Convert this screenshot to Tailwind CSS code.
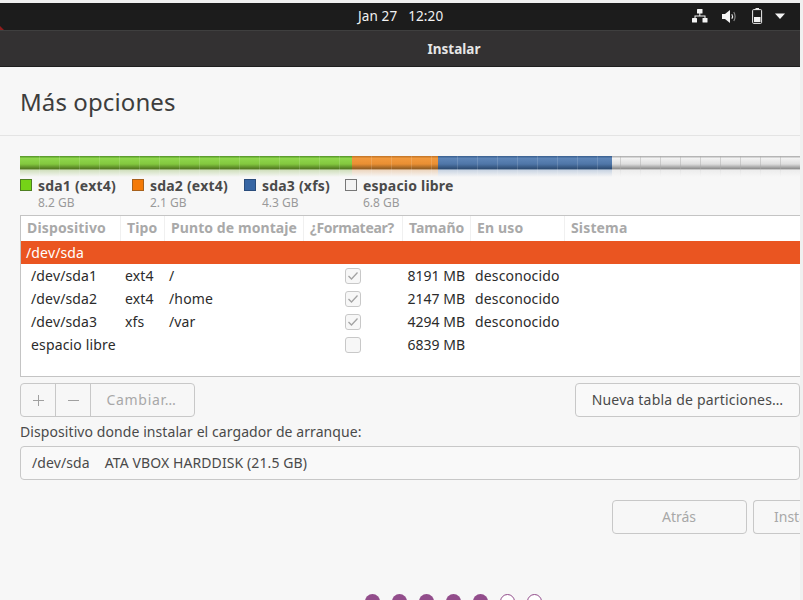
<!DOCTYPE html>
<html>
<head>
<meta charset="utf-8">
<script src="https://cdn.jsdelivr.net/npm/@tailwindcss/browser@4"></script>
</head>
<body class="bg-[#f0f0f0] font-['Noto_Sans','Open_Sans',sans-serif] overflow-hidden">
<div class="w-[803px] h-[600px] pt-[3px] overflow-hidden">
  <div class="w-[800px] h-[597px] flex flex-col bg-[#f7f7f7] overflow-hidden">
    <header class="relative h-[28px] shrink-0 bg-[#1c1c1c] border-b border-[#3f3f3f] flex items-center text-white">
      <div class="absolute left-0 bottom-0 w-0 h-0 border-l-[4px] border-l-[#8f1d1d] border-t-[4px] border-t-transparent"></div>
      <span class="absolute left-[358px] top-[4px] text-[13.5px] leading-[18px] tracking-[0.12px] text-[#f2f2f2] whitespace-pre">Jan 27   12:20</span>
      <svg class="absolute left-[692px] top-[6px]" width="16" height="15" viewBox="0 0 16 15" fill="#f4f4f4"><rect x="5" y="0" width="5.5" height="4.5" rx=".5"/><rect x="0" y="9" width="5" height="4.5" rx=".5"/><rect x="10.5" y="9" width="5" height="4.5" rx=".5"/><path d="M7.3 4h1v2.5h5.2V9h-1V7.5H3.5V9h-1V6.5h4.8z"/></svg>
      <svg class="absolute left-[722px] top-[6px]" width="15" height="15" viewBox="0 0 15 15"><path d="M0 5h3l5-4v13l-5-4H0z" fill="#f4f4f4"/><path d="M9.8 5.3q1.5 2.2 0 4.4" stroke="#f4f4f4" stroke-width="1.1" fill="none"/><path d="M11.8 3q2.6 4.5 0 9" stroke="#8a8a8a" stroke-width="1.1" fill="none"/></svg>
      <svg class="absolute left-[752px] top-[5px]" width="11" height="16" viewBox="0 0 11 16"><rect x=".6" y="1.6" width="9" height="13.8" rx="1" fill="none" stroke="#eee" stroke-width="1"/><rect x="3.5" y="0" width="3.5" height="1.5" fill="#eee"/><rect x="2" y="9" width="6.5" height="5" fill="#f4f4f4"/></svg>
      <svg class="absolute left-[775px] top-[10px]" width="11" height="7" viewBox="0 0 11 7"><path d="M0 .5h10L5 6z" fill="#f4f4f4"/></svg>
    </header>
    <div class="h-[36px] shrink-0 bg-[#333132] border-b border-[#1f1f1f] flex items-center justify-center">
      <span class="text-[13.5px] font-bold text-[#e6e6e6] ml-[108px] mt-[1px]">Instalar</span>
    </div>
    <div class="h-[69px] shrink-0 border-b border-[#e4e4e4] pl-[20px] flex items-start">
      <h1 class="text-[24px] leading-[32px] text-[#3d3d3d] mt-[19px] tracking-[0.1px]">Más opciones</h1>
    </div>
    <div class="pl-[20px] pt-[20px] flex flex-col flex-1">
      <div class="flex h-[21px] w-[780px] shrink-0">
        <div class="w-[332px] bg-[linear-gradient(180deg,transparent_0,transparent_13px,rgba(247,247,247,.55)_14px,#f7f7f7_21px),repeating-linear-gradient(90deg,transparent_0,transparent_19px,rgba(255,255,255,.14)_19px,rgba(255,255,255,.14)_20px),linear-gradient(180deg,#5d9e2e_0,#5d9e2e_1px,#90d84d_2px,#83c83f_8px,#4f7420_13px,#9fc274_14px,#9fc274_21px)]"></div>
        <div class="w-[86px] bg-[linear-gradient(180deg,transparent_0,transparent_13px,rgba(247,247,247,.55)_14px,#f7f7f7_21px),repeating-linear-gradient(90deg,transparent_0,transparent_19px,rgba(255,255,255,.14)_19px,rgba(255,255,255,.14)_20px),linear-gradient(180deg,#c97a2a_0,#c97a2a_1px,#f29a3e_2px,#e98f33_8px,#8d5a22_13px,#e0ad7a_14px,#e0ad7a_21px)]"></div>
        <div class="w-[174px] bg-[linear-gradient(180deg,transparent_0,transparent_13px,rgba(247,247,247,.55)_14px,#f7f7f7_21px),repeating-linear-gradient(90deg,transparent_0,transparent_19px,rgba(255,255,255,.14)_19px,rgba(255,255,255,.14)_20px),linear-gradient(180deg,#3f6595_0,#3f6595_1px,#5f86b8_2px,#4f76a8_8px,#2c4a70_13px,#8fa8c8_14px,#8fa8c8_21px)]"></div>
        <div class="flex-1 bg-[linear-gradient(180deg,transparent_0,transparent_13px,rgba(247,247,247,.6)_14px,#f7f7f7_21px),repeating-linear-gradient(90deg,transparent_0,transparent_8px,rgba(170,170,170,.45)_8px,rgba(170,170,170,.45)_9px,transparent_9px,transparent_20px),linear-gradient(180deg,#b5b5b5_0,#b5b5b5_1px,#f4f4f4_2px,#dedede_8px,#8a8a8a_13px,#dcdcdc_14px,#dcdcdc_21px)]"></div>
      </div>
      <div class="flex h-[38px] shrink-0 items-start">
        <div class="w-[112px] flex gap-[6px]"><span class="w-[12px] h-[12px] mt-[2px] bg-[#75d317] border border-[#4e7f21]"></span><div><div class="text-[14px] leading-[18px] tracking-[0.2px] font-bold text-[#4a4a4a]">sda1 (ext4)</div><div class="text-[12px] leading-[16px] text-[#9a9a9a]">8.2 GB</div></div></div>
        <div class="w-[112px] flex gap-[6px]"><span class="w-[12px] h-[12px] mt-[2px] bg-[#f47a07] border border-[#a7611c]"></span><div><div class="text-[14px] leading-[18px] tracking-[0.2px] font-bold text-[#4a4a4a]">sda2 (ext4)</div><div class="text-[12px] leading-[16px] text-[#9a9a9a]">2.1 GB</div></div></div>
        <div class="w-[101px] flex gap-[6px]"><span class="w-[12px] h-[12px] mt-[2px] bg-[#3766a4] border border-[#2a4d7c]"></span><div><div class="text-[14px] leading-[18px] tracking-[0.2px] font-bold text-[#4a4a4a]">sda3 (xfs)</div><div class="text-[12px] leading-[16px] text-[#9a9a9a]">4.3 GB</div></div></div>
        <div class="flex gap-[6px]"><span class="w-[12px] h-[12px] mt-[2px] bg-[#f3f3f3] border border-[#777]"></span><div><div class="text-[14px] leading-[18px] tracking-[0.2px] font-bold text-[#4a4a4a]">espacio libre</div><div class="text-[12px] leading-[16px] text-[#9a9a9a]">6.8 GB</div></div></div>
      </div>
      <div class="w-[780px] h-[162px] shrink-0 bg-white border-y border-l border-[#c4c4c4] flex flex-col text-[14px] tracking-[0.15px] text-[#2b2b2b]">
        <div class="h-[25px] shrink-0 flex text-[14px] tracking-[0.15px] font-bold text-[#a9a9a9] leading-[24px]">
          <div class="w-[100px] pl-[6px] border-r border-[#f0f0f0]">Dispositivo</div>
          <div class="w-[44px] pl-[6px] border-r border-[#f0f0f0]">Tipo</div>
          <div class="w-[139px] pl-[6px] border-r border-[#f0f0f0] whitespace-nowrap overflow-hidden tracking-[0.08px]">Punto de montaje</div>
          <div class="w-[99px] pl-[6px] border-r border-[#f0f0f0] whitespace-nowrap overflow-hidden tracking-[-0.3px]">¿Formatear?</div>
          <div class="w-[68px] pl-[6px] border-r border-[#f0f0f0] tracking-normal">Tamaño</div>
          <div class="w-[94px] pl-[6px] border-r border-[#f0f0f0]">En uso</div>
          <div class="flex-1 pl-[6px]">Sistema</div>
        </div>
        <div class="h-[23px] shrink-0 bg-[#ea5521] text-white pl-[5px] leading-[23px]">/dev/sda</div>
        <div class="h-[23px] shrink-0 flex items-center leading-[23px]">
          <div class="w-[104px] pl-[10px]">/dev/sda1</div><div class="w-[44px]">ext4</div><div class="w-[176px]">/</div>
          <div class="w-[60px]"><svg class="block" width="16" height="16" viewBox="0 0 16 16"><rect x=".5" y=".5" width="15" height="15" rx="2.5" fill="#f7f7f7" stroke="#c8c8c8"/><path d="M3.5 8l3 3 6-6.5" fill="none" stroke="#a3a3a3" stroke-width="1.3"/></svg></div>
          <div class="w-[60px] text-right whitespace-nowrap tracking-normal">8191 MB</div><div class="pl-[10px]">desconocido</div>
        </div>
        <div class="h-[23px] shrink-0 flex items-center leading-[23px]">
          <div class="w-[104px] pl-[10px]">/dev/sda2</div><div class="w-[44px]">ext4</div><div class="w-[176px]">/home</div>
          <div class="w-[60px]"><svg class="block" width="16" height="16" viewBox="0 0 16 16"><rect x=".5" y=".5" width="15" height="15" rx="2.5" fill="#f7f7f7" stroke="#c8c8c8"/><path d="M3.5 8l3 3 6-6.5" fill="none" stroke="#a3a3a3" stroke-width="1.3"/></svg></div>
          <div class="w-[60px] text-right whitespace-nowrap tracking-normal">2147 MB</div><div class="pl-[10px]">desconocido</div>
        </div>
        <div class="h-[23px] shrink-0 flex items-center leading-[23px]">
          <div class="w-[104px] pl-[10px]">/dev/sda3</div><div class="w-[44px]">xfs</div><div class="w-[176px]">/var</div>
          <div class="w-[60px]"><svg class="block" width="16" height="16" viewBox="0 0 16 16"><rect x=".5" y=".5" width="15" height="15" rx="2.5" fill="#f7f7f7" stroke="#c8c8c8"/><path d="M3.5 8l3 3 6-6.5" fill="none" stroke="#a3a3a3" stroke-width="1.3"/></svg></div>
          <div class="w-[60px] text-right whitespace-nowrap tracking-normal">4294 MB</div><div class="pl-[10px]">desconocido</div>
        </div>
        <div class="h-[23px] shrink-0 flex items-center leading-[23px]">
          <div class="w-[324px] pl-[10px]">espacio libre</div>
          <div class="w-[60px]"><svg class="block" width="16" height="16" viewBox="0 0 16 16"><rect x=".5" y=".5" width="15" height="15" rx="2.5" fill="#f7f7f7" stroke="#c8c8c8"/></svg></div>
          <div class="w-[60px] text-right whitespace-nowrap tracking-normal">6839 MB</div>
        </div>
      </div>
      <div class="w-[780px] flex justify-between mt-[6px] text-[14px]">
        <div class="flex h-[34px] border border-[#c8c8c8] rounded-[4px] text-[#a8a8a8]">
          <div class="w-[35px] border-r border-[#c8c8c8] flex items-center justify-center"><svg width="11" height="11" viewBox="0 0 11 11"><path d="M5.5 0v11M0 5.5h11" stroke="#a0a0a0" stroke-width="1"/></svg></div>
          <div class="w-[35px] border-r border-[#c8c8c8] flex items-center justify-center"><svg width="11" height="11" viewBox="0 0 11 11"><path d="M0 5.5h11" stroke="#a0a0a0" stroke-width="1"/></svg></div>
          <div class="w-[103px] pb-[2px] pr-[2px] flex items-center justify-center tracking-[0.7px]">Cambiar…</div>
        </div>
        <div class="w-[225px] h-[34px] pb-[2px] border border-[#c8c8c8] rounded-[4px] bg-[#f9f9f9] flex items-center justify-center tracking-[0.2px] text-[#4a4a4a]">Nueva tabla de particiones…</div>
      </div>
      <label class="block mt-[3px] text-[14px] leading-[24px] tracking-[0.08px] text-[#4a4a4a]">Dispositivo donde instalar el cargador de arranque:</label>
      <div class="w-[780px] h-[34px] mt-[2px] pb-[1px] shrink-0 border border-[#c8c8c8] rounded-[4px] bg-[#f9f9f9] flex items-center pl-[11px] text-[14px] tracking-[0.1px] text-[#4a4a4a] whitespace-pre">/dev/sda    ATA VBOX HARDDISK (21.5 GB)</div>
      <div class="w-[780px] flex justify-end gap-[6px] mt-[20px] text-[14px] text-[#a8a8a8]">
        <div class="w-[135px] h-[34px] pb-[2px] pr-[1px] border border-[#c8c8c8] rounded-[4px] flex items-center justify-center">Atrás</div>
        <div class="w-[47px] h-[34px] pb-[2px] border border-[#c8c8c8] border-r-0 rounded-l-[4px] flex items-center pl-[20px] overflow-hidden">Instalar</div>
      </div>
      <div class="flex gap-[12px] ml-[345px] mt-[60px]">
        <span class="w-[15px] h-[15px] shrink-0 rounded-full bg-[#924d8b]"></span>
        <span class="w-[15px] h-[15px] shrink-0 rounded-full bg-[#924d8b]"></span>
        <span class="w-[15px] h-[15px] shrink-0 rounded-full bg-[#924d8b]"></span>
        <span class="w-[15px] h-[15px] shrink-0 rounded-full bg-[#924d8b]"></span>
        <span class="w-[15px] h-[15px] shrink-0 rounded-full bg-[#924d8b]"></span>
        <span class="w-[15px] h-[15px] shrink-0 rounded-full bg-white border border-[#924d8b]"></span>
        <span class="w-[15px] h-[15px] shrink-0 rounded-full bg-white border border-[#924d8b]"></span>
      </div>
    </div>
  </div>
</div>
</body>
</html>
